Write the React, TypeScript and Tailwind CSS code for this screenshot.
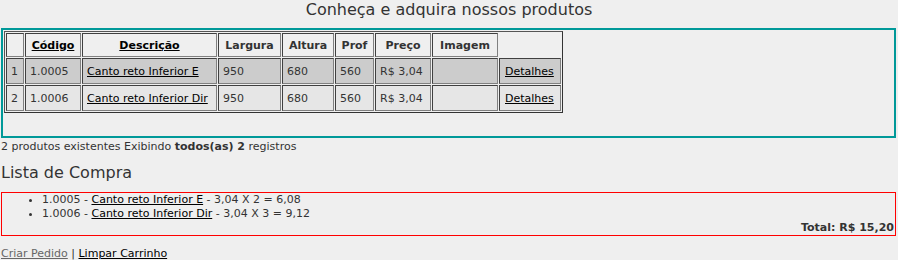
import React from 'react';

// Linhas da tabela de produtos
interface Produto {
    n: number;
    codigo: string;
    descricao: string;
    largura: string;
    altura: string;
    prof: string;
    preco: string;
}

const produtos: Produto[] = [
    { n: 1, codigo: '1.0005', descricao: 'Canto reto Inferior E', largura: '950', altura: '680', prof: '560', preco: 'R$ 3,04' },
    { n: 2, codigo: '1.0006', descricao: 'Canto reto Inferior Dir', largura: '950', altura: '680', prof: '560', preco: 'R$ 3,04' },
];

const carrinho = [
    { codigo: '1.0005', descricao: 'Canto reto Inferior E', conta: '3,04 X 2 = 6,08' },
    { codigo: '1.0006', descricao: 'Canto reto Inferior Dir', conta: '3,04 X 3 = 9,12' },
];

const cell = 'border border-t-[#404040] border-l-[#404040] border-b-[#808080] border-r-[#808080] px-[4px] p-0';

export default function App() {
    return (
        <div className="min-h-[260px] bg-[#efefef] text-[#333333] text-[11px] leading-[13px]" style={{ fontFamily: '"DejaVu Sans", Verdana, sans-serif' }}>
            <h1 className="text-center text-[16px] leading-[19px] font-normal mb-[9px]">
                Conheça e adquira nossos produtos
            </h1>

            {/* Tabela de produtos */}
            <div className="ml-px w-[895px] h-[110px] border-2 border-[#009999] p-px">
                <table className="table-fixed w-[559px] border-separate border-spacing-[1px] border border-t-[#555555] border-l-[#555555] border-b-[#333333] border-r-[#333333]">
                    <thead>
                        <tr className="font-bold">
                            <th className={`${cell} w-[18px] h-[24px]`}></th>
                            <th className={`${cell} w-[56px]`}><a href="#" className="underline text-black">Código</a></th>
                            <th className={`${cell} w-[135px]`}><a href="#" className="underline text-black">Descrição</a></th>
                            <th className={`${cell} w-[63px]`}>Largura</th>
                            <th className={`${cell} w-[52px]`}>Altura</th>
                            <th className={`${cell} w-[39px]`}>Prof</th>
                            <th className={`${cell} w-[56px]`}>Preço</th>
                            <th className={`${cell} w-[66px]`}>Imagem</th>
                            <th className="w-[62px]"></th>
                        </tr>
                    </thead>
                    <tbody>
                        {produtos.map((p) => (
                            <tr key={p.n} className={p.n % 2 === 1 ? 'bg-[#cccccc]' : 'bg-[#e6e6e6]'}>
                                <td className={`${cell} h-[26px]`}>{p.n}</td>
                                <td className={cell}>{p.codigo}</td>
                                <td className={`${cell} whitespace-nowrap`}><a href="#" className="underline text-black">{p.descricao}</a></td>
                                <td className={cell}>{p.largura}</td>
                                <td className={cell}>{p.altura}</td>
                                <td className={cell}>{p.prof}</td>
                                <td className={`${cell} whitespace-nowrap`}>{p.preco}</td>
                                <td className={cell}></td>
                                <td className={`${cell} pl-[5px]`}><a href="#" className="underline text-black">Detalhes</a></td>
                            </tr>
                        ))}
                    </tbody>
                </table>
            </div>

            <p className="mt-[2px] pl-px">
                2 produtos existentes Exibindo <b>todos(as) 2</b> registros
            </p>

            <h2 className="mt-[10px] pl-px text-[16px] leading-[19px] font-normal">Lista de Compra</h2>

            {/* Lista de compra */}
            <div className="mt-[10px] ml-px w-[895px] border border-[#ff0000] leading-[14px]">
                <ul className="list-disc pl-[40px]">
                    {carrinho.map((c) => (
                        <li key={c.codigo}>
                            {c.codigo} - <a href="#" className="underline text-black">{c.descricao}</a> - {c.conta}
                        </li>
                    ))}
                </ul>
                <div className="text-right font-bold pr-px">Total: R$ 15,20</div>
            </div>

            <div className="mt-[11px] pl-px">
                <a href="#" className="underline text-[#666666]">Criar Pedido</a> | <a href="#" className="underline text-black">Limpar Carrinho</a>
            </div>
        </div>
    );
}
